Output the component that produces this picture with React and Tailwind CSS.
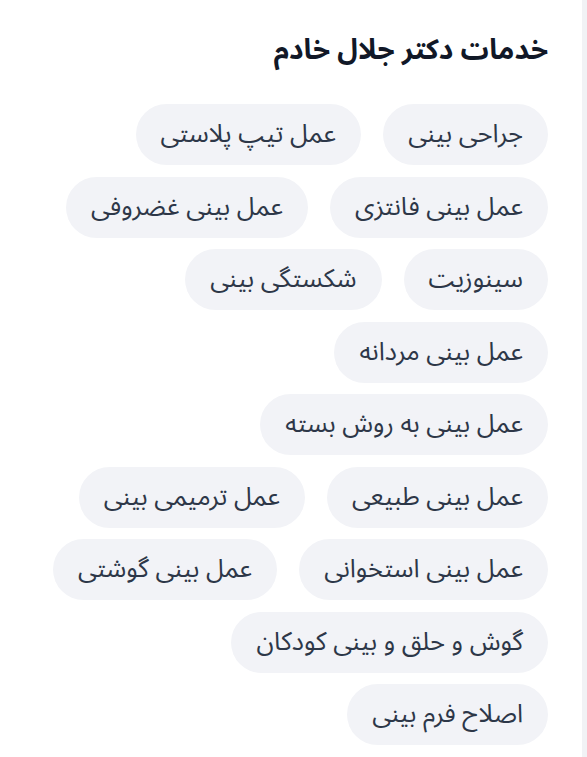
const rows = [
  ['جراحی بینی', 'عمل تیپ پلاستی'],
  ['عمل بینی فانتزی', 'عمل بینی غضروفی'],
  ['سینوزیت', 'شکستگی بینی'],
  ['عمل بینی مردانه'],
  ['عمل بینی به روش بسته'],
  ['عمل بینی طبیعی', 'عمل ترمیمی بینی'],
  ['عمل بینی استخوانی', 'عمل بینی گوشتی'],
  ['گوش و حلق و بینی کودکان'],
  ['اصلاح فرم بینی'],
];

const Chip = ({ label }) => (
  <span className="rounded-full bg-[#f2f3f7] px-[25px] py-4 text-[25.5px] leading-[29px] text-[#2d3748] whitespace-nowrap">
    {label}
  </span>
);

export default function App() {
  return (
    <div
      dir="rtl"
      className="flex min-h-[757px] bg-white"
      style={{ fontFamily: '"Noto Sans Arabic", "Noto Sans", sans-serif' }}
    >
      {/* scroll track on the right edge */}
      <div className="w-[5px] shrink-0 bg-[#f1f2f5]" />
      <div className="flex-1 pr-[34px] pl-4 pt-[31px]">
        <h2 className="text-[28px] font-bold leading-10 text-[#111827]">
          خدمات دکتر جلال خادم
        </h2>
        <div className="mt-[33px] flex flex-col gap-[11.5px]">
          {rows.map((row, i) => (
            <div key={i} className="flex gap-[22px]">
              {row.map((label) => (
                <Chip key={label} label={label} />
              ))}
            </div>
          ))}
        </div>
      </div>
    </div>
  );
}
